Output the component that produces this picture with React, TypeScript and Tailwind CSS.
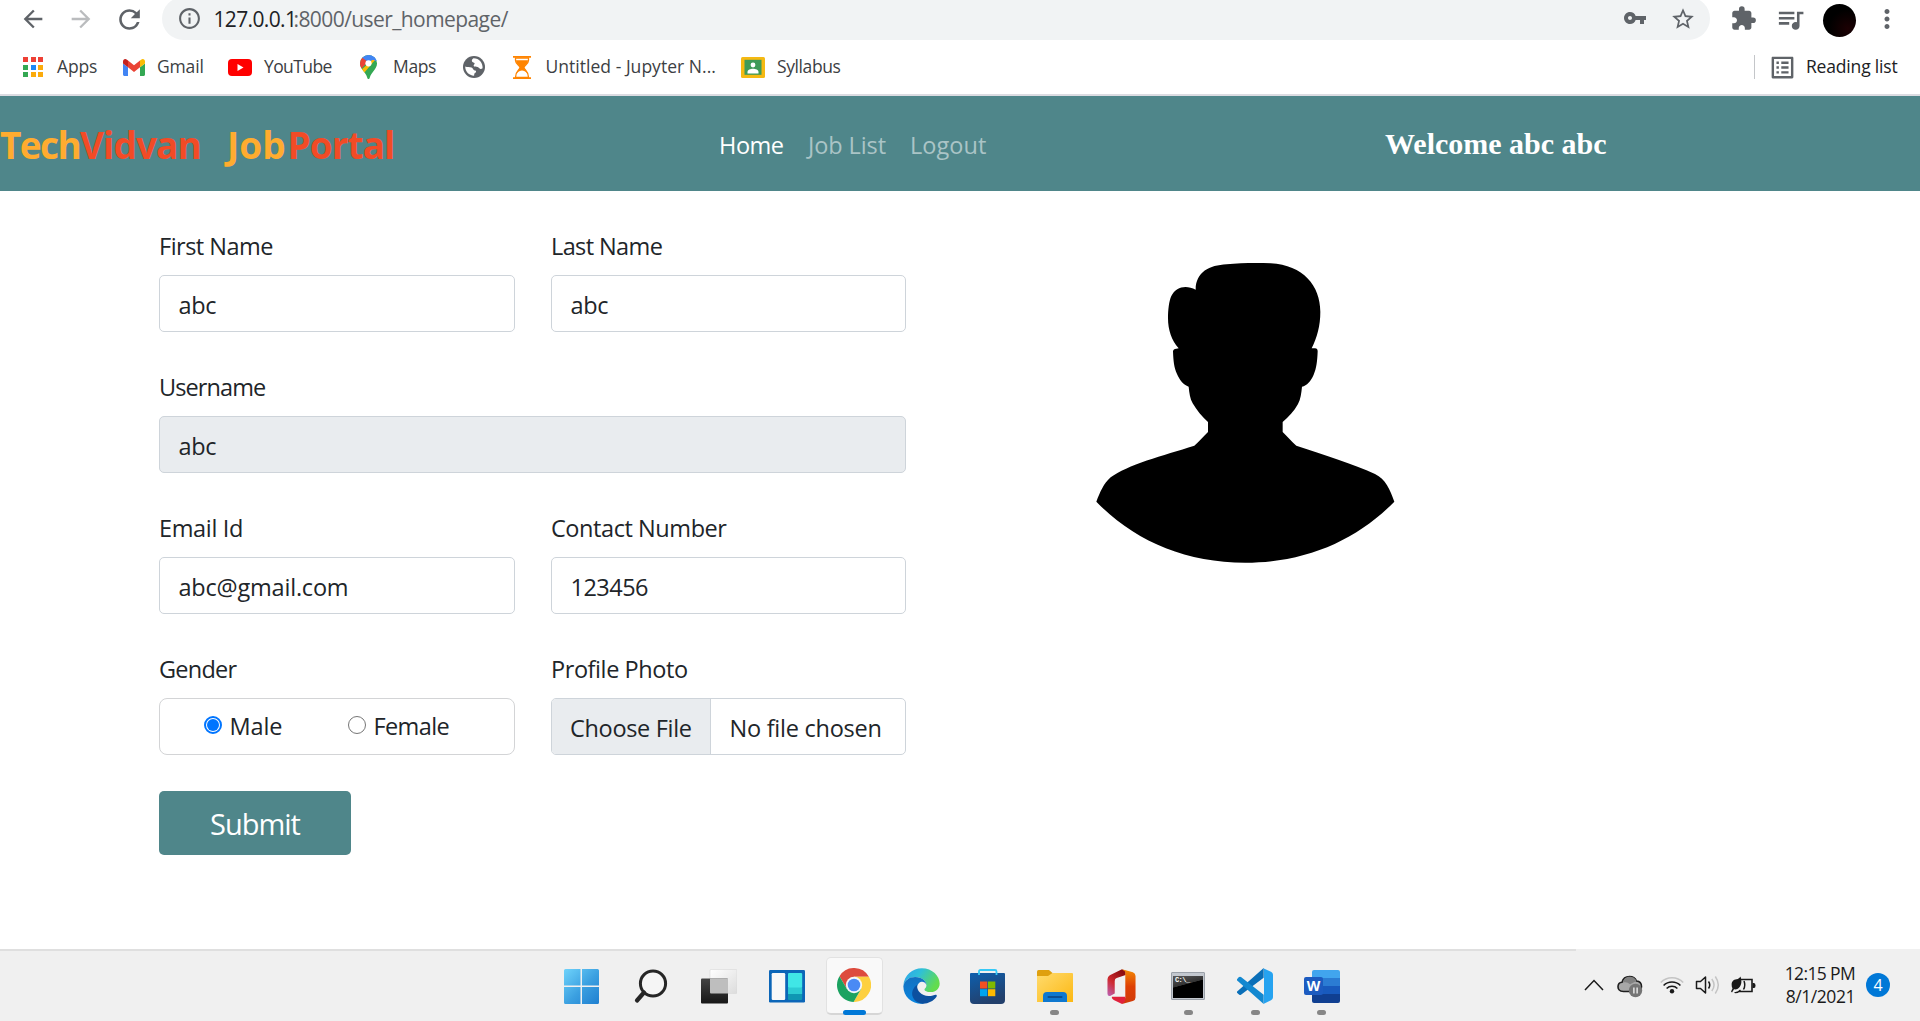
import React from 'react';
import type { ReactNode } from 'react';
import {
  MdArrowBack,
  MdArrowForward,
  MdRefresh,
  MdInfoOutline,
  MdVpnKey,
  MdStarBorder,
  MdExtension,
  MdQueueMusic,
  MdMoreVert,
  MdListAlt,
} from 'react-icons/md';

/* ---------- Bookmark icons ---------- */

function AppsIcon() {
  const colors = ['#ee4035', '#ee4035', '#ee4035', '#34a853', '#1e88f5', '#fbab0c', '#34a853', '#fbab0c', '#fbab0c'];
  return (
    <div className="grid grid-cols-3 gap-x-[2.5px] gap-y-[2.5px] w-[20px] h-[20px]">
      {colors.map((c, i) => (
        <span key={i} style={{ backgroundColor: c }} />
      ))}
    </div>
  );
}

function GmailIcon() {
  return (
    <svg width="22" height="17" viewBox="52 42 88 66" preserveAspectRatio="none">
      <path fill="#4285f4" d="M58 108h14V74L52 59v43c0 3.32 2.69 6 6 6" />
      <path fill="#34a853" d="M120 108h14c3.32 0 6-2.69 6-6V59l-20 15" />
      <path fill="#fbbc04" d="M120 48v26l20-15v-8c0-7.42-8.47-11.65-14.4-7.2" />
      <path fill="#ea4335" d="M72 74V48l24 18 24-18v26L96 92" />
      <path fill="#c5221f" d="M52 51v8l20 15V48l-5.6-4.2c-5.94-4.45-14.4-.22-14.4 7.2" />
    </svg>
  );
}

function YouTubeIcon() {
  return (
    <svg width="24" height="17" viewBox="0 0 24 17">
      <rect width="24" height="17" rx="4" fill="#ff0000" />
      <path d="M9.5 5v7l6-3.5z" fill="#fff" />
    </svg>
  );
}

function MapsIcon() {
  return (
    <svg width="17" height="24" viewBox="0 0 17 24">
      <defs>
        <clipPath id="pin">
          <path d="M8.5 0A8.4 8.4 0 0 0 0 8.5c0 3 1.400 4.900 3.200 7.200 1.800 2.300 3.200 4 3.900 6.500.3 1 .6 1.800 1.400 1.800s1.100-.8 1.400-1.800c.7-2.500 2.100-4.200 3.900-6.500C15.600 13.400 17 11.500 17 8.500A8.400 8.400 0 0 0 8.500 0z" />
        </clipPath>
      </defs>
      <g clipPath="url(#pin)">
        <rect width="17" height="24" fill="#34a853" />
        <path d="M-1 -1H18V4L9 9L2 3z" fill="#4285f4" />
        <path d="M10 -1H18V6L12 6z" fill="#4285f4" />
        <path d="M2 2.500L8 7L-1 16V2z" fill="#ea4335" />
        <path d="M8.500 8.500L-1 17L4 18L15 5L12 5z" fill="#fbbc04" />
      </g>
      <circle cx="8.500" cy="8.300" r="3.100" fill="#fff" />
    </svg>
  );
}

function GlobeIcon() {
  return (
    <svg width="22" height="22" viewBox="0 0 22 22">
      <circle cx="11" cy="11" r="11" fill="#5f6368" />
      <path
        d="M10.500 2.300C9 3.500 8.600 4.300 9 5.400c.5 1.100 2.200.9 2.600 1.900.3 1-1.200 1.500-.9 2.600.4 1.100 2.600.6 4 1.100 1.300.5 1.500 1.700 2.700 1.900.9.100 1.600-.2 2.200-.7C19.900 7 16.300 2.400 10.500 2.300zM2.200 10.600c2 .8 4.500.4 6.300 1 1.500.5 1.300 2 2.600 2.600 1 .4 1.900.2 2 1.200.1 1.100-1.500 1.300-1.800 2.300-.2.700.1 1.500-.3 2C6 19.600 2.100 15.600 2.200 10.600z"
        fill="#fff"
      />
    </svg>
  );
}

function HourglassIcon() {
  return (
    <svg width="18" height="23" viewBox="0 0 18 23">
      <path d="M0 0h18v1.700H0zM0 21.300h18V23H0z" fill="#ff8400" />
      <path d="M2.500 2v2.500C2.500 8 7 9.500 7 11.500S2.500 15 2.500 21.300h13C15.500 15 11 13.500 11 11.500S15.500 8 15.500 4.500V2z" fill="#fff" stroke="#ff8400" strokeWidth="1.300" />
      <path d="M3 4.200h12C15 8 11 9.500 11 11.500c0 1.500 2.500 3 3.400 5.500-2-1.500-3.500-2.500-5.400-2.500S5.600 15.500 3.600 17C4.500 14.500 7 13 7 11.500 7 9.500 3 8 3 4.200z" fill="#ff8400" />
    </svg>
  );
}

function ClassroomIcon() {
  return (
    <svg width="24" height="21" viewBox="0 0 24 21">
      <rect width="24" height="21" rx="1.500" fill="#f5b912" />
      <rect x="3.500" y="2.800" width="17" height="15" fill="#3f9a58" />
      <circle cx="12" cy="8" r="2.400" fill="#fff" />
      <path d="M6.500 16.500v-1.500c0-2 3-3.200 5.500-3.200s5.500 1.200 5.500 3.200v1.500z" fill="#fff" />
    </svg>
  );
}

/* ---------- Browser chrome ---------- */

function Toolbar() {
  return (
    <div className="flex items-center h-[40px] text-[#5f6368] overflow-hidden">
      <MdArrowBack className="ml-[19px] size-[28px] shrink-0 -mt-[2px]" />
      <MdArrowForward className="ml-[20px] size-[28px] shrink-0 -mt-[2px] text-[#babcbe]" />
      <MdRefresh className="ml-[19px] size-[31px] shrink-0 -mt-[2px]" />
      <div className="ml-[17px] flex h-[43px] w-[1548px] shrink-0 items-center rounded-full bg-[#f1f3f4] -mt-[3px]">
        <MdInfoOutline className="ml-[15px] size-[25px]" />
        <div className="ml-[11.500px] flex text-[21px] leading-[40px] whitespace-nowrap">
          <span className="w-[80px] text-[#202124] tracking-[-0.650px]">127.0.0.1</span>
          <span className="tracking-[-0.580px]">:8000/user_homepage/</span>
        </div>
        <MdVpnKey className="ml-auto size-[24px] -mt-[2px]" />
        <MdStarBorder className="ml-[23px] mr-[14px] size-[26px]" />
      </div>
      <MdExtension className="ml-[20px] size-[27px] shrink-0 -mt-[3px]" />
      <MdQueueMusic className="ml-[18px] size-[31px] shrink-0 -mt-[2px]" />
      <div className="ml-[17px] size-[33px] shrink-0 rounded-full bg-[radial-gradient(circle_at_75%_75%,#1c0003,#000_55%)]" />
      <MdMoreVert className="ml-[16px] size-[30px] shrink-0 -mt-[2px]" />
    </div>
  );
}

function Bookmark({ icon, label, box, text }: { icon: ReactNode; label?: string; box: string; text?: string }) {
  return (
    <div className={'flex shrink-0 items-center whitespace-nowrap ' + box}>
      {icon}
      {label && <span className={'leading-[26px] -mt-[3px] ' + text}>{label}</span>}
    </div>
  );
}

function BookmarksBar() {
  return (
    <div className="flex items-center h-[54px] pl-[23px] text-[17.500px] text-[#3c4043]">
      <Bookmark box="w-[100px]" icon={<AppsIcon />} label="Apps" text="ml-[14px] tracking-[-0.150px]" />
      <Bookmark box="w-[105px]" icon={<GmailIcon />} label="Gmail" text="ml-[12px] tracking-[-0.150px]" />
      <Bookmark box="w-[132px]" icon={<YouTubeIcon />} label="YouTube" text="ml-[12px] tracking-[-0.600px]" />
      <Bookmark box="w-[103px]" icon={<MapsIcon />} label="Maps" text="ml-[16px] tracking-[-0.350px]" />
      <Bookmark box="w-[50px]" icon={<GlobeIcon />} />
      <Bookmark box="w-[228px]" icon={<HourglassIcon />} label="Untitled - Jupyter N..." text="ml-[14.500px] tracking-[0.030px]" />
      <Bookmark box="w-[120px]" icon={<ClassroomIcon />} label="Syllabus" text="ml-[12px] tracking-[-0.400px]" />
      <div className="ml-auto h-[24px] w-px bg-[#c4c6c9]" />
      <MdListAlt className="ml-[13px] size-[29px] text-[#5f6368]" />
      <span className="ml-[9px] w-[114px] -mt-[3px] leading-[26px] tracking-[-0.180px] text-[#202124]">Reading list</span>
    </div>
  );
}

/* ---------- Page ---------- */

function Navbar() {
  return (
    <header className="flex items-center h-[95px] bg-[#4f868a] whitespace-nowrap">
      <div className="flex w-[719px] pt-[2px] text-[37px] leading-[50px] font-bold">
        <span className="w-[80px] text-[#ffac2f] tracking-[-1.600px]">Tech</span>
        <span className="w-[147px] text-[#f24b26] tracking-[-0.930px]">Vidvan</span>
        <span className="w-[60.600px] text-[#ffac2f]">Job</span>
        <span className="text-[#f24b26] tracking-[-0.990px]">Portal</span>
      </div>
      <nav className="flex w-[666px] pt-[2px] text-[23.500px] leading-[34px] text-[#aac4c6]">
        <a className="w-[89px] text-white tracking-[-0.450px]">Home</a>
        <a className="w-[102px] tracking-[-0.100px]">Job List</a>
        <a className="tracking-[0.050px]">Logout</a>
      </nav>
      <h2 className="font-['Liberation_Serif',serif] text-[30px] leading-[36px] font-bold text-white">Welcome abc abc</h2>
    </header>
  );
}

function Field({ label, labelClass, children, wide }: { label: string; labelClass: string; children: ReactNode; wide?: boolean }) {
  return (
    <div className={wide ? 'col-span-2' : ''}>
      <div className={'h-[36px] leading-[36px] mb-[11px] ' + labelClass}>{label}</div>
      {children}
    </div>
  );
}

function TextBox({ value, className = '' }: { value: string; className?: string }) {
  return (
    <div className={'h-[57px] rounded-[5px] border border-[#ced4da] pl-[18.500px] pt-[2px] leading-[55px] ' + className}>
      {value}
    </div>
  );
}

function Radio({ checked }: { checked?: boolean }) {
  return checked ? (
    <span className="-mt-[4px] flex size-[18px] items-center justify-center rounded-full border-2 border-[#0075ff]">
      <span className="size-[12px] rounded-full bg-[#0075ff]" />
    </span>
  ) : (
    <span className="-mt-[4px] size-[18px] rounded-full border-[1.500px] border-[#767676]" />
  );
}

function ProfileForm() {
  return (
    <form className="w-[747px] text-[23.500px] text-[#212529] whitespace-nowrap">
      <div className="grid grid-cols-[356px_355px] gap-x-[36px] gap-y-[37px]">
        <Field label="First Name" labelClass="tracking-[-0.500px]">
          <TextBox value="abc" className="tracking-[-0.300px]" />
        </Field>
        <Field label="Last Name" labelClass="tracking-[-0.600px]">
          <TextBox value="abc" className="tracking-[-0.300px]" />
        </Field>
        <Field label="Username" labelClass="tracking-[-0.900px]" wide>
          <TextBox value="abc" className="bg-[#e9ecef] tracking-[-0.300px]" />
        </Field>
        <Field label="Email Id" labelClass="tracking-[-0.350px]">
          <TextBox value="abc@gmail.com" className="tracking-[-0.200px]" />
        </Field>
        <Field label="Contact Number" labelClass="tracking-[-0.430px]">
          <TextBox value="123456" className="tracking-[-0.520px]" />
        </Field>
        <Field label="Gender" labelClass="tracking-[-0.750px]">
          <div className="flex h-[57px] items-center rounded-[8px] border border-[#d3d4d6] pl-[44px] leading-[55px]">
            <span className="flex w-[144px] items-center">
              <Radio checked />
              <span className="ml-[7.500px] tracking-[-0.100px]">Male</span>
            </span>
            <span className="flex items-center">
              <Radio />
              <span className="ml-[7.500px] tracking-[-0.600px]">Female</span>
            </span>
          </div>
        </Field>
        <Field label="Profile Photo" labelClass="tracking-[-0.420px]">
          <div className="flex h-[57px] overflow-hidden rounded-[5px] border border-[#ced4da] leading-[59px]">
            <span className="w-[159px] border-r border-[#ced4da] bg-[#e9ecef] pl-[18px] tracking-[-0.320px]">Choose File</span>
            <span className="pl-[18.500px] tracking-[-0.250px]">No file chosen</span>
          </div>
        </Field>
      </div>
      <div className="mt-[36px] h-[64px] w-[192px] rounded-[5px] bg-[#4f868a] pt-px pl-[51px] text-[29px] leading-[64px] tracking-[-1.000px] text-white">
        Submit
      </div>
    </form>
  );
}

function Silhouette() {
  return (
    <svg className="ml-[164px] mt-[12px]" width="350" height="340" viewBox="0 0 1050 1020">
      <path
        fill="#000"
        d="M377 149 C378 95 418 76 470 73 C510 69 560 68 602 70 C700 75 751 138 751 215 C751 258 741 292 725 325 L735 325 Q743 325 743 334 C742 364 739 387 731 404 C722 424 711 436 696 440 C694 460 692 477 684 492 C672 514 656 531 638 546 L638 576 C652 590 665 605 679 617 C765 646 850 671 915 702 C947 717 960 750 973 785 C860 900 710 968 526 968 C342 968 190 900 79 785 C90 757 101 730 122 712 C170 675 280 646 373 617 C387 605 400 590 414 576 L414 546 C396 531 380 510 368 490 C360 475 358 460 356 440 C340 434 329 421 321 402 C312 383 310 362 309 334 Q310 326 319 326 L326 325 C305 302 294 270 294 235 C294 210 297 183 304 168 C318 140 348 134 377 149 Z"
      />
    </svg>
  );
}

/* ---------- Taskbar icons ---------- */

function WindowsIcon() {
  return (
    <svg width="35" height="35" viewBox="0 0 35 35">
      <defs>
        <linearGradient id="win" x1="0" y1="0" x2="1" y2="1">
          <stop offset="0" stopColor="#6fd3fb" />
          <stop offset=".55" stopColor="#3a9fe0" />
          <stop offset="1" stopColor="#1f7fd0" />
        </linearGradient>
      </defs>
      <path
        fill="url(#win)"
        d="M1.500 0H16.500V16.500H0V1.500A1.500 1.500 0 0 1 1.500 0zM18 0h15.500A1.500 1.500 0 0 1 35 1.500V16.500H18zM0 18H16.500V35H1.500A1.500 1.500 0 0 1 0 33.500zM18 18H35V33.500A1.500 1.500 0 0 1 33.500 35H18z"
      />
    </svg>
  );
}

function SearchIcon() {
  return (
    <svg width="34" height="35" viewBox="0 0 34 35" fill="none" stroke="#262626" strokeLinecap="round">
      <circle cx="19" cy="14.500" r="12.600" strokeWidth="3" fill="#f5f5f5" />
      <path d="M10 23.500L3 31.500" strokeWidth="4.200" />
    </svg>
  );
}

function TaskViewIcon() {
  return (
    <svg width="36" height="35" viewBox="0 0 36 35">
      <defs>
        <linearGradient id="tvd" x1="0" y1="0" x2="0" y2="1">
          <stop offset="0" stopColor="#444" />
          <stop offset="1" stopColor="#171717" />
        </linearGradient>
        <linearGradient id="tvl" x1="0" y1="0" x2="1" y2="1">
          <stop offset="0" stopColor="#fff" />
          <stop offset="1" stopColor="#dcdcdc" />
        </linearGradient>
      </defs>
      <rect x="9" y=".5" width="27" height="24" rx="1" fill="url(#tvl)" stroke="#d8d8d8" strokeWidth=".6" />
      <rect x="0" y="9.500" width="27" height="25" rx="1" fill="url(#tvd)" />
      <path d="M9 9.500H27V24.500H10Q9 24.500 9 23.500z" fill="#bebebe" />
    </svg>
  );
}

function WidgetsIcon() {
  return (
    <svg width="36" height="33" viewBox="0 0 36 33">
      <rect width="36" height="32.500" rx="1.200" fill="#0c66b8" />
      <rect x="2.700" y="3" width="13.500" height="27" rx="1.200" fill="#f8f8f8" />
      <rect x="19" y="3" width="14.200" height="15" rx="1" fill="#40e6e6" />
      <rect x="19" y="17.500" width="14.200" height="6.500" fill="#2ccbd3" />
      <path d="M19 24h14.200v5q0 1-1 1H20q-1 0-1-1z" fill="#0f97b3" />
    </svg>
  );
}

function ChromeIcon() {
  return (
    <svg width="34" height="34" viewBox="-50 -50 100 100">
      <path fill="#dd4b3e" d="M-42.700 -26A50 50 0 0 1 43.900 -24L0 -24L-20.800 12z" />
      <path fill="#fdd03f" d="M43.900 -24A50 50 0 0 1 -1.200 50L20.800 12L0 -24z" />
      <path fill="#1ba260" d="M-1.200 50A50 50 0 0 1 -42.700 -26L-20.800 12L20.800 12z" />
      <circle r="24" fill="#f3f6fb" />
      <circle r="18.500" fill="#4a8af4" />
    </svg>
  );
}

function EdgeIcon() {
  return (
    <svg width="37" height="36" viewBox="1089 83 112 109">
      <defs>
        <linearGradient id="ed1" x1="0" y1="0" x2="1" y2=".45">
          <stop offset="0" stopColor="#2f9fee" />
          <stop offset=".45" stopColor="#2fc0d8" />
          <stop offset="1" stopColor="#62dc4e" />
        </linearGradient>
        <linearGradient id="ed2" x1="0" y1="0" x2="0" y2="1">
          <stop offset="0" stopColor="#1270c0" />
          <stop offset="1" stopColor="#0a86e0" />
        </linearGradient>
      </defs>
      <path fill="url(#ed1)" d="M1090 137C1092 105 1118 84 1146 84C1178 84 1200 108 1200 130C1200 146 1188 156 1174 156C1162 156 1154 152 1154 148C1154 145 1160 143 1160 135C1160 122 1146 110 1126 110C1106 110 1093 122 1090 137z" />
      <path fill="url(#ed2)" d="M1090 138C1093 120 1108 110 1126 110C1146 110 1160 122 1160 135C1157 127 1150 124 1145 125C1132 128 1126 146 1136 164C1142 178 1156 187 1150 191C1120 194 1090 172 1090 138z" />
      <path fill="#0c509f" d="M1132 134C1129 152 1146 168 1166 168C1178 168 1185 163 1189 164C1192 165 1192 168 1190 171C1180 184 1164 192 1148 191C1126 190 1112 170 1118 152C1121 143 1127 138 1132 134z" />
    </svg>
  );
}

function StoreIcon() {
  return (
    <svg width="35" height="35" viewBox="0 0 35 35">
      <defs>
        <linearGradient id="store" x1="0" y1="0" x2=".4" y2="1">
          <stop offset="0" stopColor="#0d5fae" />
          <stop offset="1" stopColor="#23406c" />
        </linearGradient>
      </defs>
      <path d="M0 5Q0 4 1 4H34Q35 4 35 5V31Q35 35 31 35H4Q0 35 0 31z" fill="url(#store)" />
      <path d="M9 6V2.500Q9 1 10.500 1H25Q26.500 1 26.500 2.500V6" fill="none" stroke="#36c9f7" strokeWidth="1.800" />
      <rect x="10" y="12.500" width="7.300" height="7" fill="#f25022" />
      <rect x="18" y="12.500" width="7.300" height="7" fill="#7fba00" />
      <rect x="10" y="20.200" width="7.300" height="7" fill="#00a4ef" />
      <rect x="18" y="20.200" width="7.300" height="7" fill="#ffb900" />
    </svg>
  );
}

function ExplorerIcon() {
  return (
    <svg width="36" height="33" viewBox="0 0 36 33">
      <defs>
        <linearGradient id="fold" x1="0" y1="0" x2="1" y2="1">
          <stop offset="0" stopColor="#ffdb6e" />
          <stop offset="1" stopColor="#fcb813" />
        </linearGradient>
      </defs>
      <path d="M0 1.500Q0 0 1.500 0H12L15.500 3V8H0z" fill="#dfa00f" />
      <path d="M0 6H11L15.500 3H35Q36 3 36 4V32H0z" fill="url(#fold)" />
      <path d="M6 32V26Q6 22 10 22H26Q30 22 30 26V32z" fill="#0f78cf" />
      <rect x="10.500" y="26" width="15" height="2" rx="1" fill="#0b4f94" />
    </svg>
  );
}

function OfficeIcon() {
  return (
    <svg width="29" height="35" viewBox="474 84 87 106">
      <defs>
        <linearGradient id="of1" x1="0" y1="0" x2="0" y2="1">
          <stop offset="0" stopColor="#f28a05" />
          <stop offset=".5" stopColor="#de3f04" />
          <stop offset="1" stopColor="#cf3a0a" />
        </linearGradient>
        <linearGradient id="of2" x1=".6" y1="0" x2="0" y2="1">
          <stop offset="0" stopColor="#8e0d10" />
          <stop offset=".5" stopColor="#cf2a30" />
          <stop offset="1" stopColor="#bb63b8" />
        </linearGradient>
      </defs>
      <path fill="url(#of2)" d="M519 85L482 103Q475 107 475 115V159Q475 167 483 166L497 158V120Q497 113 503 111L530 102V90z" />
      <path fill="url(#of1)" d="M519 85L552 94Q560 97 560 105V170Q560 178 552 181L519 190L529 172V92z" />
      <path fill="#e0213c" d="M489 168H529V178Q528 186 519 190L494 178Q486 172 489 168z" />
    </svg>
  );
}

function TerminalIcon() {
  return (
    <div className="flex h-[28px] w-[34px] flex-col rounded-[1px] border border-[#9aa0a8] bg-[#c3c8cf] p-[1px] pt-[3px]">
      <div className="flex-1 bg-[linear-gradient(165deg,#5a5a5a_0%,#333_38%,#000_40%)] pl-[1.500px] font-['Liberation_Mono',monospace] text-[7px] leading-[8px] font-bold tracking-[-0.500px] text-white">
        C:\_
      </div>
    </div>
  );
}

function VSCodeIcon() {
  return (
    <svg width="36" height="36" viewBox="864 84 108 108">
      <path fill="#0a6fb8" d="M864 158L869 163Q872 166 876 164L944 113V84L867 152Q863 155 864 158z" />
      <path fill="#1388d0" d="M864 118L869 112Q872 109 876 111L944 164V192L867 124Q863 121 864 118z" />
      <path fill="#26a3f0" d="M941 84L966 95Q972 98 972 104V172Q972 178 966 181L943 192Q945 190 945 186V90Q945 86 941 84z" />
    </svg>
  );
}

function WordIcon() {
  return (
    <div className="relative h-[33px] w-[36px]">
      <div className="ml-[8px] flex h-[33px] w-[28px] flex-col overflow-hidden rounded-[2px]">
        <span className="flex-1 bg-[#41a5ee]" />
        <span className="flex-1 bg-[#2b7cd3]" />
        <span className="flex-1 bg-[#185abd]" />
        <span className="flex-1 bg-[#103f91]" />
      </div>
      <span className="absolute top-[7px] left-0 h-[18px] w-[19px] rounded-[2px] bg-[#1c5bc0] text-center text-[14px] leading-[18px] font-bold text-white">
        W
      </span>
    </div>
  );
}

/* ---------- Taskbar ---------- */

function Slot({ icon, state, width = 'w-[66.800px]' }: { icon: ReactNode; state?: 'active' | 'open'; width?: string }) {
  return (
    <div className={'relative flex h-[58px] shrink-0 items-center justify-center ' + width}>
      <div
        className={
          state === 'active'
            ? 'flex h-[58px] w-[57px] items-center justify-center rounded-[5px] border border-[#e2e2e2] border-b-2 border-b-[#d6d6d6] bg-[#f9f9f9] pb-px'
            : 'flex items-center justify-center'
        }
      >
        {icon}
      </div>
      {state === 'active' && <span className="absolute bottom-0 h-[5px] w-[23px] rounded-full bg-[#0078d7]" />}
      {state === 'open' && <span className="absolute bottom-0 h-[5px] w-[9px] rounded-full bg-[#868686]" />}
    </div>
  );
}

function Tray() {
  return (
    <div className="ml-auto flex w-[336px] items-center h-[58px] text-[#1a1a1a]">
      <svg className="mt-[-3px]" width="20" height="12" viewBox="0 0 20 12" fill="none" stroke="#1a1a1a" strokeWidth="1.500">
        <path d="M1 11L10 1.500L19 11" />
      </svg>
      <svg className="ml-[13px] mt-[-1px]" width="26" height="24" viewBox="0 0 26 24">
        <path d="M6.500 17.500C2 17.500 1 14.500 1 12.800 1 10 3.200 8.500 5 8.300 6 4.500 9 2.500 12.500 2.500c3.500 0 6 2 7 4.500 3 .3 5 2.500 5 5.500 0 3-2 5-5 5z" fill="#a8a8a8" stroke="#1f1f1f" strokeWidth="1.600" />
        <path d="M6 8.500c3-.8 5 .2 7 1.700L19.500 7C18 3.500 15.500 2.700 12.500 2.700 9 2.700 6.500 5 6 8.500z" fill="#828282" />
        <circle cx="18.500" cy="16.500" r="6.700" fill="#757575" />
        <path d="M16.900 13.500v6M20.100 13.500v6" stroke="#fff" strokeWidth="1.200" />
      </svg>
      <svg className="ml-[16.500px] mt-[-3px]" width="24" height="18" viewBox="0 0 24 18" fill="none" strokeWidth="1.600">
        <path d="M.8 6.500A15.500 15.500 0 0 1 23.200 6.500" stroke="#c4c4c4" />
        <path d="M3.600 9.500A11.800 11.800 0 0 1 20.400 9.500" stroke="#1a1a1a" />
        <path d="M6.600 12.500A7.700 7.700 0 0 1 17.400 12.500" stroke="#1a1a1a" />
        <circle cx="12" cy="15.300" r="2.200" fill="#1a1a1a" />
      </svg>
      <svg className="ml-[11px] mt-[-3px]" width="26" height="20" viewBox="0 0 26 20" fill="none" stroke="#1a1a1a" strokeWidth="1.500">
        <path d="M1.500 6.500h4L10.500 2v16l-5-4.500h-4z" strokeLinejoin="round" />
        <path d="M13.500 6.500q2.500 3.500 0 7" />
        <path d="M16.800 4q4.500 6 0 12M20.300 1.500q6 8.500 0 17" stroke="#c4c4c4" />
      </svg>
      <svg className="ml-[10.500px] mt-[-3px]" width="25" height="18" viewBox="0 0 25 18">
        <path d="M9 3.500H21V15.500H8" fill="none" stroke="#1a1a1a" strokeWidth="1.600" />
        <path d="M21.500 7h1.500q1.500 0 1.500 2.500t-1.500 2.500h-1.500z" fill="#1a1a1a" />
        <path d="M9.500 .5C10.500 4 11 7 9 10.500 7.500 13 5 13.800 3 13.300L1 16.500 0 15.500 1.500 12.500C-.5 8 1 3.500 5.500 3.300 7.500 3 8.500 2 9.500 .5z" fill="#1a1a1a" />
        <path d="M13 5q1.800 4.500-.5 8.500" fill="none" stroke="#1a1a1a" strokeWidth="1.500" />
        <path d="M3.500 16.500Q7 17 9.500 14" fill="none" stroke="#1a1a1a" strokeWidth="1.200" />
      </svg>
      <div className="ml-auto -mt-[2px] text-right text-[17.500px] leading-[23px] whitespace-nowrap">
        <div className="tracking-[-0.650px]">12:15 PM</div>
        <div className="tracking-[-0.450px]">8/1/2021</div>
      </div>
      <span className="ml-[11px] mr-[30px] mt-[-3px] size-[24px] shrink-0 rounded-full bg-[#0078d7] text-center text-[16px] leading-[24px] text-white">4</span>
    </div>
  );
}

function Taskbar() {
  return (
    <footer className="h-[72px] bg-[#f0f0f0]">
      <div className="h-[2px] w-[1576px] bg-[#dfdfdf]" />
      <div className="flex pt-[6px] pl-[546px]">
        <Slot icon={<WindowsIcon />} width="w-[71px]" />
        <Slot icon={<SearchIcon />} width="w-[68px]" />
        <Slot icon={<TaskViewIcon />} width="w-[68px]" />
        <Slot icon={<WidgetsIcon />} width="w-[68px]" />
        <Slot icon={<ChromeIcon />} state="active" />
        <Slot icon={<EdgeIcon />} />
        <Slot icon={<StoreIcon />} />
        <Slot icon={<ExplorerIcon />} state="open" />
        <Slot icon={<OfficeIcon />} />
        <Slot icon={<TerminalIcon />} state="open" />
        <Slot icon={<VSCodeIcon />} state="open" />
        <Slot icon={<WordIcon />} state="open" />
        <Tray />
      </div>
    </footer>
  );
}

export default function App() {
  return (
    <div className="flex h-[1021px] w-[1920px] flex-col overflow-hidden bg-white font-['Open_Sans',sans-serif]">
      <Toolbar />
      <BookmarksBar />
      <div className="h-[2px] bg-[#dcdce2]" />
      <Navbar />
      <main className="flex flex-1 items-start pl-[159px] pt-[37px]">
        <ProfileForm />
        <Silhouette />
      </main>
      <Taskbar />
    </div>
  );
}
